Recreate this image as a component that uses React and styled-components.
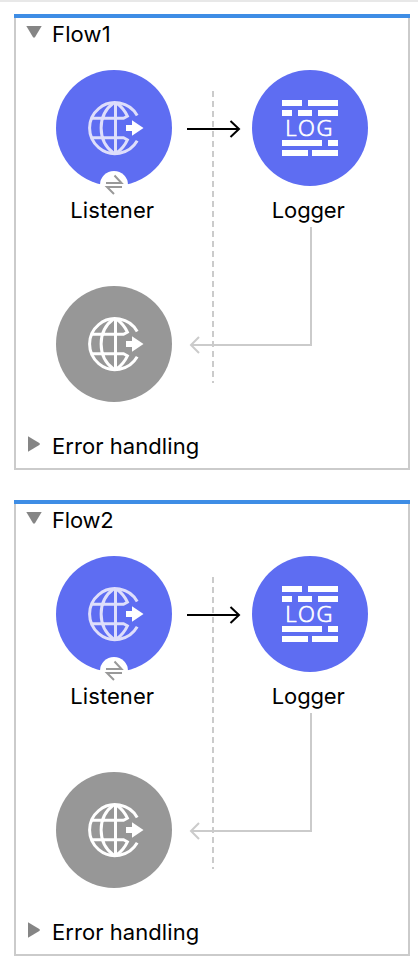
import React from "react";
import styled, { createGlobalStyle } from "styled-components";

const GlobalStyle = createGlobalStyle`
  *, *::before, *::after { box-sizing: border-box; }
  body {
    margin: 0;
    background: #fff;
    color: #000;
    font-family: Inter, "Liberation Sans", sans-serif;
  }
`;

const Page = styled.main`
  display: flex;
  flex-direction: column;
  gap: 30px;
  height: 968px;
  padding: 12px 8px 12px 14px;
  border-top: 2px solid #e8e8e8;
  overflow: hidden;
`;

const Panel = styled.section`
  display: flex;
  flex-direction: column;
  height: 456px;
  flex: none;
  border: 2px solid #cbcbcb;
  border-top: 0;
`;

const Accent = styled.div`
  height: 4px;
  flex: none;
  margin: 0 -2px;
  background: #3e8de5;
`;

const Bar = styled.header`
  display: flex;
  align-items: center;
  flex: none;
  height: ${(p) => p.$height}px;
  padding-left: 10px;
  gap: 10px;
`;

const Disclosure = styled.svg`
  width: 16px;
  height: 20px;
  flex: none;
`;

const Title = styled.span`
  font-size: 22px;
  line-height: 26px;
  letter-spacing: ${(p) => p.$tracking}px;
  white-space: nowrap;
`;

const Stage = styled.div`
  position: relative;
  flex: 1;
  display: grid;
  grid-template-columns: 116px 116px;
  grid-template-rows: 152px 116px;
  column-gap: 80px;
  row-gap: 64px;
  padding: 20px 0 0 40px;
`;

const Connectors = styled.svg`
  position: absolute;
  inset: 0;
  width: 392px;
  height: 374px;
  pointer-events: none;
`;

const Node = styled.div`
  display: flex;
  flex-direction: column;
  align-items: center;
`;

const Disc = styled.div`
  position: relative;
  width: 116px;
  height: 116px;
  flex: none;
  border-radius: 50%;
  background: ${(p) => (p.$muted ? "#979797" : "#5e6df2")};
`;

const Glyph = styled.svg`
  display: block;
  width: 116px;
  height: 116px;
  overflow: visible;
`;

const LogText = styled.text`
  font-family: "Open Sans", "Noto Sans", sans-serif;
  font-weight: 300;
  font-size: 22px;
  fill: #fff;
  stroke: #fff;
  stroke-width: 0.7px;
`;

const Badge = styled.svg`
  position: absolute;
  left: 44px;
  top: 101px;
  width: 28px;
  height: 28px;
`;

const Label = styled.span`
  margin: 11px 3.5px 0 0;
  font-size: 22px;
  line-height: 26px;
  letter-spacing: ${(p) => p.$tracking}px;
  white-space: nowrap;
`;

function Globe({ color }) {
  return (
    <Glyph viewBox="0 0 116 116">
      <g fill="none" stroke={color} strokeWidth="3">
        <path d="M81.2 45.4A25.5 25.5 0 1 0 81.2 70.8" />
        <path d="M59.5 32.5V83.5" />
        <path d="M57.5 33C41 45 41 71 57.5 83" />
        <path d="M60.5 33C66 37 69.5 42 71.4 46.2L67.5 48.3H36" />
        <path d="M60.5 83C66 79 69.5 74 71.4 69.8L67.5 67.7H36" />
      </g>
      <path d="M70 55H76V50.2L87.5 58L76 65.8V61H70Z" fill="#fff" />
    </Glyph>
  );
}

const LOG_BLOCKS = [
  [30, 30, 20], [56, 30, 30],
  [30, 40, 10], [46, 40, 14], [66, 40, 20],
  [30, 70, 40], [76, 70, 10],
  [30, 80, 26], [60, 80, 26],
];

function LogIcon() {
  return (
    <Glyph viewBox="0 0 116 116">
      {LOG_BLOCKS.map(([x, y, w]) => (
        <rect key={`${x}-${y}`} x={x} y={y} width={w} height="6" fill="#fff" />
      ))}
      <LogText x="33.3" y="66" textLength="47" lengthAdjust="spacing">LOG</LogText>
    </Glyph>
  );
}

function ExchangeBadge() {
  return (
    <Badge viewBox="0 0 28 28">
      <circle cx="14" cy="14" r="14" fill="#fff" />
      <path d="M6 12H21.5L14.5 4.5M22 16H7L14 23" fill="none" stroke="#999" strokeWidth="2" />
    </Badge>
  );
}

function Flow({ name, tracking }) {
  return (
    <Panel>
      <Accent />
      <Bar $height={32}>
        <Disclosure viewBox="0 0 16 20">
          <path d="M0.3 2H15.7L8.8 13.5H7.2Z" fill="#858585" />
        </Disclosure>
        <Title $tracking={tracking}>{name}</Title>
      </Bar>
      <Stage>
        <Node>
          <Disc>
            <Globe color="#dedefb" />
            <ExchangeBadge />
          </Disc>
          <Label $tracking={0.06}>Listener</Label>
        </Node>
        <Node>
          <Disc>
            <LogIcon />
          </Disc>
          <Label $tracking={-0.15}>Logger</Label>
        </Node>
        <Node>
          <Disc $muted>
            <Globe color="#fff" />
          </Disc>
        </Node>
        <Connectors viewBox="16 50 392 374" fill="none" strokeWidth="2">
          <path d="M213 91V383" stroke="#cbcbcb" strokeDasharray="6 4" />
          <path d="M311 227V345H191M199 337L191 345L199 353" stroke="#cbcbcb" />
          <path d="M187 129H239M230.5 121L239 129L230.5 137" stroke="#000" />
        </Connectors>
      </Stage>
      <Bar as="footer" $height={44}>
        <Disclosure viewBox="0 0 16 20">
          <path d="M2 0.3V15.7L13.7 8.8V7.2Z" fill="#858585" />
        </Disclosure>
        <Title $tracking={0.06}>Error handling</Title>
      </Bar>
    </Panel>
  );
}

export default function App() {
  return (
    <>
      <GlobalStyle />
      <Page>
        <Flow name="Flow1" tracking={0.15} />
        <Flow name="Flow2" tracking={-0.2} />
      </Page>
    </>
  );
}
